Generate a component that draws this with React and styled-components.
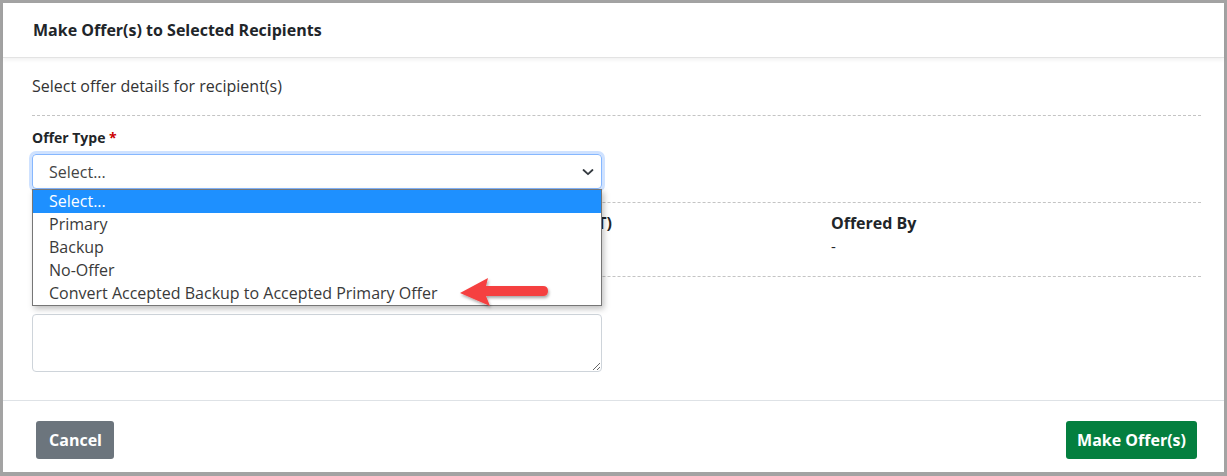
import React from "react";
import styled, { createGlobalStyle } from "styled-components";

const GlobalStyle = createGlobalStyle`
  html, body {
    margin: 0;
    padding: 0;
    background: #a3a3a3;
  }
  body {
    font-family: "Open Sans", "Liberation Sans", sans-serif;
    color: #212529;
  }
  * {
    box-sizing: border-box;
  }
`;

const options = [
  "Select...",
  "Primary",
  "Backup",
  "No-Offer",
  "Convert Accepted Backup to Accepted Primary Offer",
];

const App = () => {
  return (
    <>
      <GlobalStyle />
      <Frame>
        <Modal>
          <Header>
            <Title>Make Offer(s) to Selected Recipients</Title>
          </Header>
          <Body>
            <Intro>Select offer details for recipient(s)</Intro>
            <Field>
              <Label>
                Offer Type <Required>*</Required>
              </Label>
              <SelectWrap>
                <SelectBox>
                  <span>Select...</span>
                  <Chevron viewBox="0 0 12 12">
                    <path
                      d="M1.5 4l4.5 4.2L10.5 4"
                      fill="none"
                      stroke="#343a40"
                      strokeWidth="1.8"
                      strokeLinecap="round"
                      strokeLinejoin="round"
                    />
                  </Chevron>
                </SelectBox>
                <Dropdown>
                  {options.map((o, i) => (
                    <Option key={o} active={i === 0}>
                      {o}
                    </Option>
                  ))}
                </Dropdown>
                <Arrow viewBox="0 0 100 40">
                  <defs>
                    <filter id="sh" x="-20%" y="-30%" width="140%" height="160%">
                      <feDropShadow dx="1" dy="2" stdDeviation="1.6" floodColor="#000" floodOpacity="0.35" />
                    </filter>
                  </defs>
                  <path
                    filter="url(#sh)"
                    fill="#f5403f"
                    d="M5 20 L33 5 L31 13 L88 13 Q93 13 93 18 Q93 23 88 23 L31 23 L35 33 Z"
                  />
                </Arrow>
              </SelectWrap>
            </Field>
            <InfoRow>
              <InfoCol />
              <InfoCol>
                <InfoHead>Offered Date/Time (CT)</InfoHead>
              </InfoCol>
              <InfoCol>
                <InfoHead>Offered By</InfoHead>
                <InfoValue>-</InfoValue>
              </InfoCol>
            </InfoRow>
            <CommentField>
              <TextArea />
            </CommentField>
          </Body>
          <Footer>
            <Button variant="secondary">Cancel</Button>
            <Button variant="success">Make Offer(s)</Button>
          </Footer>
        </Modal>
      </Frame>
    </>
  );
};

export default App;

const Frame = styled.div`
  padding: 3px 3px 4px 3px;
  height: 476px;
`;

const Modal = styled.div`
  background: #fff;
  height: 469px;
  display: flex;
  flex-direction: column;
`;

const Header = styled.div`
  height: 55px;
  padding: 0 30px;
  display: flex;
  align-items: center;
  border-bottom: 1px solid #e3e3e3;
  box-shadow: 0 2px 4px rgba(0, 0, 0, 0.06);
  position: relative;
  z-index: 1;
`;

const Title = styled.h5`
  margin: 0;
  font-size: 16px;
  font-weight: 700;
  color: #212529;
`;

const Body = styled.div`
  flex: 1;
  padding: 17px 23px 0 29px;
`;

const Intro = styled.p`
  margin: 0;
  padding-bottom: 18px;
  font-size: 16px;
  line-height: 22px;
  color: #333;
  border-bottom: 1px dashed #c4c4c4;
`;

const Field = styled.div`
  padding-top: 12px;
  display: flex;
  flex-direction: column;
  align-items: flex-start;
`;

const Label = styled.label`
  font-size: 14px;
  font-weight: 700;
  line-height: 20px;
  margin-bottom: 6px;
  color: #212529;
`;

const Required = styled.span`
  color: #c00;
`;

const SelectWrap = styled.div`
  position: relative;
  width: 570px;
`;

const SelectBox = styled.div`
  height: 35px;
  border: 1px solid #86b7fe;
  border-radius: 4px;
  box-shadow: 0 0 0 3px rgba(13, 110, 253, 0.2);
  display: flex;
  align-items: center;
  justify-content: space-between;
  padding: 0 7px 0 16px;
  font-size: 16px;
  color: #444;
`;

const Chevron = styled.svg`
  width: 12px;
  height: 12px;
`;

const Dropdown = styled.div`
  position: absolute;
  top: 35px;
  left: 0;
  width: 570px;
  background: #fff;
  border: 1px solid #767676;
  box-shadow: 2px 3px 6px rgba(0, 0, 0, 0.25);
  z-index: 5;
`;

const Option = styled.div`
  height: 23px;
  line-height: 23px;
  padding-left: 16px;
  font-size: 16px;
  color: ${(p) => (p.active ? "#fff" : "#3a3a3a")};
  background: ${(p) => (p.active ? "#1e90ff" : "#fff")};
`;

const Arrow = styled.svg`
  position: absolute;
  left: 423px;
  top: 119px;
  width: 100px;
  height: 40px;
  z-index: 6;
`;

const InfoRow = styled.div`
  margin-top: 13px;
  border-top: 1px dashed #c4c4c4;
  border-bottom: 1px dashed #c4c4c4;
  padding: 9px 0 19px;
  display: grid;
  grid-template-columns: 396px 403px 1fr;
`;

const InfoCol = styled.div`
  display: flex;
  flex-direction: column;
`;

const InfoHead = styled.div`
  font-size: 16px;
  font-weight: 700;
  line-height: 22px;
  color: #212529;
`;

const InfoValue = styled.div`
  font-size: 15px;
  line-height: 22px;
  margin-top: 1px;
  color: #212529;
`;

const CommentField = styled.div`
  padding-top: 37px;
`;

const TextArea = styled.textarea`
  display: block;
  width: 570px;
  height: 58px;
  border: 1px solid #ced4da;
  border-radius: 4px;
  font-family: inherit;
  resize: vertical;
`;

const Footer = styled.div`
  height: 72px;
  border-top: 1px solid #dee2e6;
  padding: 20px 27px 0 33px;
  display: flex;
  justify-content: space-between;
  align-items: flex-start;
`;

const Button = styled.button`
  height: 38px;
  padding: ${(p) => (p.variant === "success" ? "0 11px" : "0 12px 0 13px")};
  min-width: ${(p) => (p.variant === "success" ? "0" : "78px")};
  border: none;
  border-radius: 3px;
  font-family: inherit;
  font-size: 16px;
  font-weight: 700;
  color: #fff;
  background: ${(p) => (p.variant === "success" ? "#047f3f" : "#6c757d")};
`;
